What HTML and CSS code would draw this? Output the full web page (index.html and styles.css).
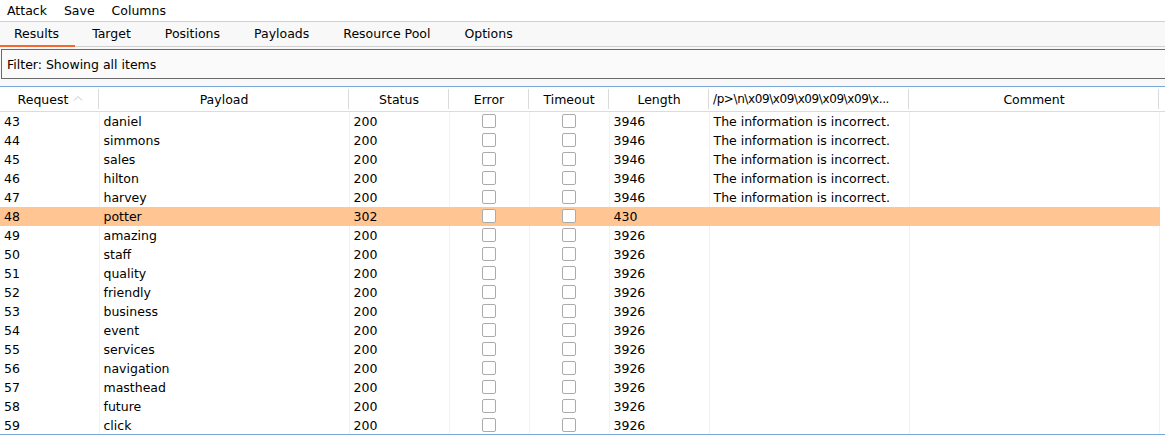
FILE: index.html
```html
<!DOCTYPE html>
<html>
<head>
<meta charset="utf-8">
<link rel="stylesheet" href="styles.css">
</head>
<body>
<div class="app">
  <div class="menubar">
    <span class="menu-item">Attack</span>
    <span class="menu-item">Save</span>
    <span class="menu-item">Columns</span>
  </div>
  <div class="tabs">
    <span class="tab active">Results</span>
    <span class="tab">Target</span>
    <span class="tab">Positions</span>
    <span class="tab">Payloads</span>
    <span class="tab">Resource Pool</span>
    <span class="tab">Options</span>
  </div>
  <div class="filter-wrap">
    <div class="filter">Filter: Showing all items</div>
  </div>
  <div class="table-wrap">
    <table class="results">
      <colgroup>
        <col class="c-req"><col class="c-pay"><col class="c-status"><col class="c-err"><col class="c-to"><col class="c-len"><col class="c-grep"><col class="c-com"><col class="c-rest">
      </colgroup>
      <thead>
        <tr>
          <th><span class="sort">Request<svg class="arrow" width="10" height="6" viewBox="0 0 10 6"><path d="M1 5.5 L5 1.5 L9 5.5" fill="none" stroke="#c4c4c4" stroke-width="1"/></svg></span></th>
          <th>Payload</th>
          <th>Status</th>
          <th>Error</th>
          <th>Timeout</th>
          <th>Length</th>
          <th class="left">/p&gt;\n\x09\x09\x09\x09\x09\x...</th>
          <th>Comment</th>
          <th class="rest"></th>
        </tr>
      </thead>
      <tbody>
        <tr><td>43</td><td>daniel</td><td>200</td><td class="cb"><span class="box"></span></td><td class="cb"><span class="box"></span></td><td>3946</td><td>The information is incorrect.</td><td></td><td></td></tr>
        <tr><td>44</td><td>simmons</td><td>200</td><td class="cb"><span class="box"></span></td><td class="cb"><span class="box"></span></td><td>3946</td><td>The information is incorrect.</td><td></td><td></td></tr>
        <tr><td>45</td><td>sales</td><td>200</td><td class="cb"><span class="box"></span></td><td class="cb"><span class="box"></span></td><td>3946</td><td>The information is incorrect.</td><td></td><td></td></tr>
        <tr><td>46</td><td>hilton</td><td>200</td><td class="cb"><span class="box"></span></td><td class="cb"><span class="box"></span></td><td>3946</td><td>The information is incorrect.</td><td></td><td></td></tr>
        <tr><td>47</td><td>harvey</td><td>200</td><td class="cb"><span class="box"></span></td><td class="cb"><span class="box"></span></td><td>3946</td><td>The information is incorrect.</td><td></td><td></td></tr>
        <tr class="hl"><td>48</td><td>potter</td><td>302</td><td class="cb"><span class="box"></span></td><td class="cb"><span class="box"></span></td><td>430</td><td></td><td></td><td class="rest"></td></tr>
        <tr><td>49</td><td>amazing</td><td>200</td><td class="cb"><span class="box"></span></td><td class="cb"><span class="box"></span></td><td>3926</td><td></td><td></td><td></td></tr>
        <tr><td>50</td><td>staff</td><td>200</td><td class="cb"><span class="box"></span></td><td class="cb"><span class="box"></span></td><td>3926</td><td></td><td></td><td></td></tr>
        <tr><td>51</td><td>quality</td><td>200</td><td class="cb"><span class="box"></span></td><td class="cb"><span class="box"></span></td><td>3926</td><td></td><td></td><td></td></tr>
        <tr><td>52</td><td>friendly</td><td>200</td><td class="cb"><span class="box"></span></td><td class="cb"><span class="box"></span></td><td>3926</td><td></td><td></td><td></td></tr>
        <tr><td>53</td><td>business</td><td>200</td><td class="cb"><span class="box"></span></td><td class="cb"><span class="box"></span></td><td>3926</td><td></td><td></td><td></td></tr>
        <tr><td>54</td><td>event</td><td>200</td><td class="cb"><span class="box"></span></td><td class="cb"><span class="box"></span></td><td>3926</td><td></td><td></td><td></td></tr>
        <tr><td>55</td><td>services</td><td>200</td><td class="cb"><span class="box"></span></td><td class="cb"><span class="box"></span></td><td>3926</td><td></td><td></td><td></td></tr>
        <tr><td>56</td><td>navigation</td><td>200</td><td class="cb"><span class="box"></span></td><td class="cb"><span class="box"></span></td><td>3926</td><td></td><td></td><td></td></tr>
        <tr><td>57</td><td>masthead</td><td>200</td><td class="cb"><span class="box"></span></td><td class="cb"><span class="box"></span></td><td>3926</td><td></td><td></td><td></td></tr>
        <tr><td>58</td><td>future</td><td>200</td><td class="cb"><span class="box"></span></td><td class="cb"><span class="box"></span></td><td>3926</td><td></td><td></td><td></td></tr>
        <tr><td>59</td><td>click</td><td>200</td><td class="cb"><span class="box"></span></td><td class="cb"><span class="box"></span></td><td>3926</td><td></td><td></td><td></td></tr>
      </tbody>
    </table>
  </div>
  <div class="bottom-line"></div>
</div>
</body>
</html>
```
FILE: styles.css
```css
html, body {
  margin: 0;
  padding: 0;
  background: #ffffff;
  overflow: hidden;
}
.app {
  width: 1165px;
  height: 436px;
  font-family: "DejaVu Sans", sans-serif;
  font-size: 12.5px;
  color: #000;
  display: flex;
  flex-direction: column;
  overflow: hidden;
}
.menubar {
  height: 21px;
  display: flex;
  align-items: center;
  padding-left: 7px;
  gap: 17px;
  background: #fff;
  line-height: 18px;
}
.tabs {
  height: 24px;
  display: flex;
  background: #f8f8f8;
  border-top: 1px solid #d0d0d0;
  border-bottom: 1px solid #d0d0d0;
}
.tab {
  padding: 0 17px;
  display: flex;
  align-items: center;
  border-bottom: 2px solid transparent;
  margin-bottom: -1px;
  box-sizing: border-box;
}
.tab.active {
  padding-left: 14px;
  padding-right: 16px;
  border-bottom-color: #f2682e;
}
.filter-wrap {
  background: #f8f8f8;
  padding: 2px 0 7px 1px;
  border-bottom: 1px solid #7aa7da;
}
.filter {
  height: 28px;
  width: 1180px;
  border: 1px solid #6a6a6a;
  background: #fafafa;
  display: flex;
  align-items: center;
  padding-left: 5px;
}
.table-wrap {
  height: 347px;
  overflow: hidden;
}
.results {
  table-layout: fixed;
  border-collapse: collapse;
  width: 1165px;
}
.c-req { width: 99px; }
.c-pay { width: 250px; }
.c-status { width: 100px; }
.c-err { width: 80px; }
.c-to { width: 80px; }
.c-len { width: 100px; }
.c-grep { width: 200px; }
.c-com { width: 250px; }
.c-rest { width: 6px; }
.results th {
  height: 24px;
  font-weight: normal;
  text-align: center;
  padding: 0;
  border-bottom: 1px solid #dcdcdc;
  background: #fff;
  background-image: linear-gradient(#dadada, #dadada);
  background-size: 1px 20px;
  background-position: right center;
  background-repeat: no-repeat;
  white-space: nowrap;
  overflow: hidden;
}
.results th.left {
  text-align: left;
  padding-left: 4px;
  font-size: 12px;
  letter-spacing: -0.4px;
}
.results th.rest {
  background-image: none;
}
.sort {
  display: inline-flex;
  align-items: center;
  gap: 5px;
  margin-left: 2px;
}
.arrow {
  margin-top: -2px;
}
.results td {
  height: 19px;
  padding: 0 0 0 4px;
  line-height: 19px;
  border-right: 1px solid #f2f2f2;
  white-space: nowrap;
  overflow: hidden;
}
.results tr.hl td {
  background: #ffc593;
  border-right-color: #ffc593;
}
.results tr.hl td.rest {
  background: #fff;
}
.results td.cb {
  text-align: center;
  padding: 0;
}
.box {
  display: inline-block;
  width: 12px;
  height: 12px;
  border: 1px solid #ababab;
  border-radius: 2px;
  background: #fff;
  vertical-align: middle;
  margin-top: -3px;
}
.bottom-line {
  height: 1px;
  background: #7aa7da;
}
```
